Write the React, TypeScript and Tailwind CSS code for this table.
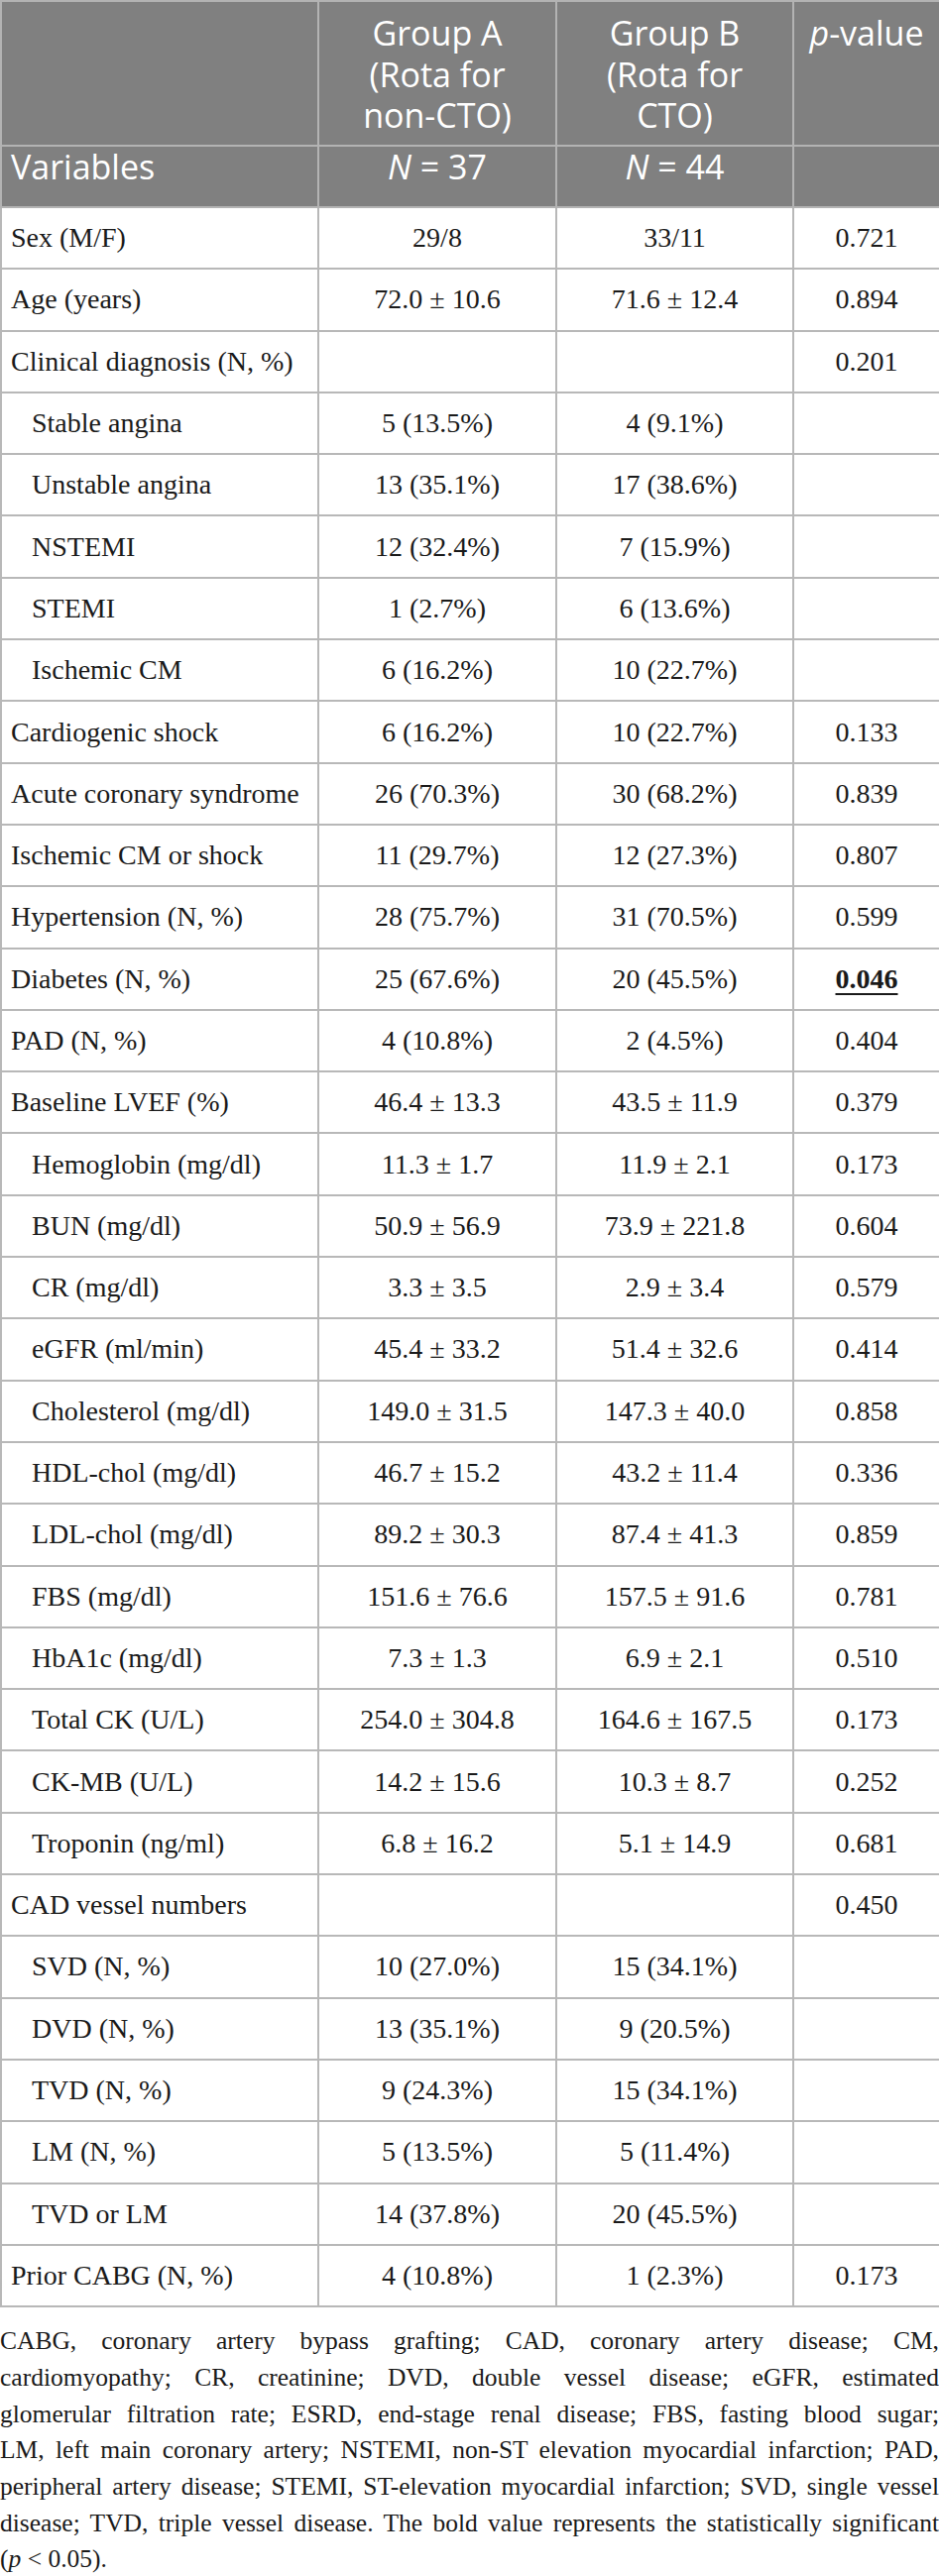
type Row = {
  label: string;
  a: string;
  b: string;
  p: string;
  sub?: boolean;
  bold?: boolean;
};

const rows: Row[] = [
  { label: 'Sex (M/F)', a: '29/8', b: '33/11', p: '0.721' },
  { label: 'Age (years)', a: '72.0 ± 10.6', b: '71.6 ± 12.4', p: '0.894' },
  { label: 'Clinical diagnosis (N, %)', a: '', b: '', p: '0.201' },
  { label: 'Stable angina', a: '5 (13.5%)', b: '4 (9.1%)', p: '', sub: true },
  { label: 'Unstable angina', a: '13 (35.1%)', b: '17 (38.6%)', p: '', sub: true },
  { label: 'NSTEMI', a: '12 (32.4%)', b: '7 (15.9%)', p: '', sub: true },
  { label: 'STEMI', a: '1 (2.7%)', b: '6 (13.6%)', p: '', sub: true },
  { label: 'Ischemic CM', a: '6 (16.2%)', b: '10 (22.7%)', p: '', sub: true },
  { label: 'Cardiogenic shock', a: '6 (16.2%)', b: '10 (22.7%)', p: '0.133' },
  { label: 'Acute coronary syndrome', a: '26 (70.3%)', b: '30 (68.2%)', p: '0.839' },
  { label: 'Ischemic CM or shock', a: '11 (29.7%)', b: '12 (27.3%)', p: '0.807' },
  { label: 'Hypertension (N, %)', a: '28 (75.7%)', b: '31 (70.5%)', p: '0.599' },
  { label: 'Diabetes (N, %)', a: '25 (67.6%)', b: '20 (45.5%)', p: '0.046', bold: true },
  { label: 'PAD (N, %)', a: '4 (10.8%)', b: '2 (4.5%)', p: '0.404' },
  { label: 'Baseline LVEF (%)', a: '46.4 ± 13.3', b: '43.5 ± 11.9', p: '0.379' },
  { label: 'Hemoglobin (mg/dl)', a: '11.3 ± 1.7', b: '11.9 ± 2.1', p: '0.173', sub: true },
  { label: 'BUN (mg/dl)', a: '50.9 ± 56.9', b: '73.9 ± 221.8', p: '0.604', sub: true },
  { label: 'CR (mg/dl)', a: '3.3 ± 3.5', b: '2.9 ± 3.4', p: '0.579', sub: true },
  { label: 'eGFR (ml/min)', a: '45.4 ± 33.2', b: '51.4 ± 32.6', p: '0.414', sub: true },
  { label: 'Cholesterol (mg/dl)', a: '149.0 ± 31.5', b: '147.3 ± 40.0', p: '0.858', sub: true },
  { label: 'HDL-chol (mg/dl)', a: '46.7 ± 15.2', b: '43.2 ± 11.4', p: '0.336', sub: true },
  { label: 'LDL-chol (mg/dl)', a: '89.2 ± 30.3', b: '87.4 ± 41.3', p: '0.859', sub: true },
  { label: 'FBS (mg/dl)', a: '151.6 ± 76.6', b: '157.5 ± 91.6', p: '0.781', sub: true },
  { label: 'HbA1c (mg/dl)', a: '7.3 ± 1.3', b: '6.9 ± 2.1', p: '0.510', sub: true },
  { label: 'Total CK (U/L)', a: '254.0 ± 304.8', b: '164.6 ± 167.5', p: '0.173', sub: true },
  { label: 'CK-MB (U/L)', a: '14.2 ± 15.6', b: '10.3 ± 8.7', p: '0.252', sub: true },
  { label: 'Troponin (ng/ml)', a: '6.8 ± 16.2', b: '5.1 ± 14.9', p: '0.681', sub: true },
  { label: 'CAD vessel numbers', a: '', b: '', p: '0.450' },
  { label: 'SVD (N, %)', a: '10 (27.0%)', b: '15 (34.1%)', p: '', sub: true },
  { label: 'DVD (N, %)', a: '13 (35.1%)', b: '9 (20.5%)', p: '', sub: true },
  { label: 'TVD (N, %)', a: '9 (24.3%)', b: '15 (34.1%)', p: '', sub: true },
  { label: 'LM (N, %)', a: '5 (13.5%)', b: '5 (11.4%)', p: '', sub: true },
  { label: 'TVD or LM', a: '14 (37.8%)', b: '20 (45.5%)', p: '', sub: true },
  { label: 'Prior CABG (N, %)', a: '4 (10.8%)', b: '1 (2.3%)', p: '0.173' },
];

const notes = [
  'CABG, coronary artery bypass grafting; CAD, coronary artery disease; CM,',
  'cardiomyopathy; CR, creatinine; DVD, double vessel disease; eGFR, estimated',
  'glomerular filtration rate; ESRD, end-stage renal disease; FBS, fasting blood sugar;',
  'LM, left main coronary artery; NSTEMI, non-ST elevation myocardial infarction; PAD,',
  'peripheral artery disease; STEMI, ST-elevation myocardial infarction; SVD, single vessel',
  'disease; TVD, triple vessel disease. The bold value represents the statistically significant',
];

export default function App() {
  const th = 'border-2 border-[#b3b3b3] px-2 text-center align-top font-normal';
  const td = 'border-2 border-[#b8b8b8] px-2 text-center';

  return (
    <div className="w-[947px] bg-white text-[#1a1a1a]">
      <table className="w-full table-fixed border-collapse">
        <colgroup>
          <col className="w-[320px]" />
          <col className="w-[240px]" />
          <col className="w-[239px]" />
          <col className="w-[148px]" />
        </colgroup>

        {/* header */}
        <thead className="bg-[#808080] text-white font-['Open_Sans',sans-serif] text-[34px] leading-[41.7px]">
          <tr className="h-[146px]">
            <th className={th}></th>
            <th className={`${th} pt-[11px]`}>
              Group A<br />(Rota for<br />non-CTO)
            </th>
            <th className={`${th} pt-[11px]`}>
              Group B<br />(Rota for<br />CTO)
            </th>
            <th className={`${th} pt-[11px] px-1`}>
              <i>p</i>-value
            </th>
          </tr>
          <tr className="h-[62px]">
            <th className={`${th} align-middle text-left pl-[9px]`}>Variables</th>
            <th className={`${th} align-middle`}>
              <i>N</i> = 37
            </th>
            <th className={`${th} align-middle`}>
              <i>N</i> = 44
            </th>
            <th className={th}></th>
          </tr>
        </thead>

        {/* body */}
        <tbody className="font-['Liberation_Serif',serif] text-[28px] leading-[36px]">
          {rows.map((r) => (
            <tr key={r.label} className="h-[62.3px]">
              <td className={`border-2 border-[#b8b8b8] text-left ${r.sub ? 'pl-[30px]' : 'pl-[9px]'}`}>
                {r.label}
              </td>
              <td className={td}>{r.a}</td>
              <td className={td}>{r.b}</td>
              <td className={td}>
                {r.bold ? (
                  <span className="font-bold underline decoration-2 underline-offset-[5px]">{r.p}</span>
                ) : (
                  r.p
                )}
              </td>
            </tr>
          ))}
        </tbody>
      </table>

      {/* footnote */}
      <div className="mt-[16px] font-['Liberation_Serif',serif] text-[25.5px] leading-[36.7px]">
        {notes.map((n) => (
          <div key={n} className="whitespace-nowrap text-justify [text-align-last:justify]">
            {n}
          </div>
        ))}
        <div>
          (<i>p</i> &lt; 0.05).
        </div>
      </div>
    </div>
  );
}
